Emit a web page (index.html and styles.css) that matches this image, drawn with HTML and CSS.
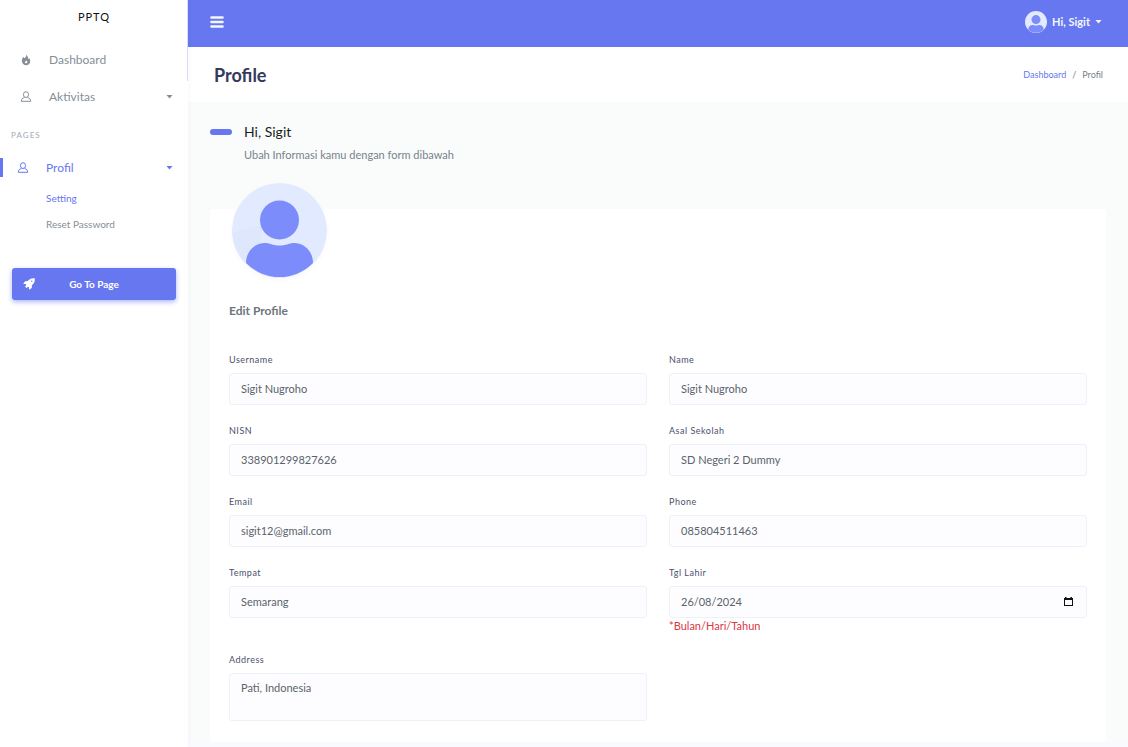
FILE: index.html
```html
<!DOCTYPE html>
<html lang="id">
<head>
<meta charset="utf-8">
<meta name="viewport" content="width=device-width, initial-scale=1">
<title>Profile</title>
<link rel="stylesheet" href="styles.css">
</head>
<body>
<svg class="sprite" aria-hidden="true">
  <symbol id="user-line" viewBox="0 0 12 12"><g fill="none" stroke="currentColor" stroke-width="1"><ellipse cx="6" cy="3.6" rx="2.6" ry="2.9"/><path d="M4.4 6.6C2.500 7 1.300 8 1.300 10.300H10.700C10.700 8 9.500 7 7.600 6.600"/></g></symbol>
  <symbol id="person" viewBox="0 0 95 95"><circle cx="47.500" cy="37" r="19.500"/><path d="M14 80C14 69 22 60 33 60C38 60 40 62.500 47.500 62.500S57 60 62 60C73 60 81 69 81 80A47 47 0 0 1 14 80Z"/></symbol>
</svg>
<div class="app">
  <aside class="sidebar">
    <a class="brand" href="#">PPTQ</a>
    <nav class="menu">
      <a class="menu-item" href="#">
        <svg class="menu-icon" viewBox="0 0 12 12"><path fill="currentColor" d="M6.100.8C6.600 2.400 5.600 3.200 4.600 4.200C3.900 3.800 3.700 3.300 3.700 2.800C2.400 4 1.800 5.600 1.900 7C2 9.600 3.900 11.200 6 11.200S10.200 9.600 10.200 7.200C10.200 5.700 9.500 4.600 8.900 3.800C8.800 4.600 8.500 5 8.100 5.200C8.200 3.300 7.500 1.600 6.100.8ZM6.500 6.500C7.200 7.100 7.500 7.700 7.400 8.300C7.200 9 6.700 9.300 6.100 9.300C5.400 9.300 4.900 8.800 4.900 8.200C5 7.500 5.700 7.300 6.500 6.500Z"/></svg>
        <span class="menu-text">Dashboard</span>
      </a>
      <a class="menu-item" href="#">
        <svg class="menu-icon"><use href="#user-line"/></svg>
        <span class="menu-text">Aktivitas</span>
        <span class="caret"></span>
      </a>
      <h2 class="menu-heading">PAGES</h2>
      <a class="menu-item menu-item-active" href="#">
        <svg class="menu-icon"><use href="#user-line"/></svg>
        <span class="menu-text">Profil</span>
        <span class="caret"></span>
      </a>
      <div class="submenu">
        <a class="submenu-item submenu-active" href="#">Setting</a>
        <a class="submenu-item" href="#">Reset Password</a>
      </div>
    </nav>
    <button class="page-button" type="button">
      <svg class="rocket" viewBox="0 0 12 12"><path fill="currentColor" d="M11.700.3C8.500-.1 6.500.9 4.700 3.100L2.100 3.200L.2 6L3 6.100L3.200 7.200L2 8.400L3.700 10L4.900 8.800L5.900 9L6 11.800L8.800 9.900L8.900 7.300C11.100 5.500 12.100 3.500 11.700.3Z"/><circle cx="8.800" cy="3.200" r=".7" fill="#6777ef"/></svg>
      <span class="page-button-text">Go To Page</span>
    </button>
  </aside>
  <div class="main">
    <header class="navbar">
      <button class="toggle" type="button" aria-label="Menu">
        <svg class="bars" viewBox="0 0 14 12"><path stroke="currentColor" stroke-width="2.600" stroke-linecap="round" d="M1.500 1.500H12.500M1.500 6H12.500M1.500 10.500H12.500"/></svg>
      </button>
      <button class="account" type="button">
        <svg class="account-photo" viewBox="0 0 95 95"><circle cx="47.500" cy="47.500" r="47.500" fill="#e1eaff"/><use href="#person" fill="#7c8dfb"/></svg>
        <span>Hi, Sigit</span>
        <span class="caret"></span>
      </button>
    </header>
    <div class="page-header">
      <h1 class="page-title">Profile</h1>
      <nav class="crumbs" aria-label="Breadcrumb">
        <a class="crumb-link" href="#">Dashboard</a><span>/</span><span>Profil</span>
      </nav>
    </div>
    <main class="content">
      <section class="intro">
        <h2 class="greeting">Hi, Sigit</h2>
        <p class="lead">Ubah Informasi kamu dengan form dibawah</p>
      </section>
      <section class="card">
        <svg class="avatar" viewBox="0 0 95 95" role="img" aria-label="Sigit"><circle cx="47.500" cy="47.500" r="47.500" fill="#e1eaff"/><path d="M0 50L30 42L28 65L12 79A47.500 47.500 0 0 1 0 50Z" fill="#dee7fc"/><use href="#person" fill="#7c8dfb"/></svg>
        <h3 class="card-title">Edit Profile</h3>
        <form class="form">
          <div class="field"><label class="label" for="username">Username</label><input class="control" id="username" value="Sigit Nugroho"></div>
          <div class="field"><label class="label" for="name">Name</label><input class="control" id="name" value="Sigit Nugroho"></div>
          <div class="field"><label class="label" for="nisn">NISN</label><input class="control" id="nisn" value="338901299827626"></div>
          <div class="field"><label class="label" for="school">Asal Sekolah</label><input class="control" id="school" value="SD Negeri 2 Dummy"></div>
          <div class="field"><label class="label" for="email">Email</label><input class="control" id="email" type="email" value="sigit12@gmail.com"></div>
          <div class="field"><label class="label" for="phone">Phone</label><input class="control" id="phone" type="tel" value="085804511463"></div>
          <div class="field"><label class="label" for="place">Tempat</label><input class="control" id="place" value="Semarang"></div>
          <div class="field">
            <label class="label" for="birth">Tgl Lahir</label>
            <div class="date">
              <input class="control" id="birth" value="26/08/2024">
              <button class="date-button" type="button" aria-label="Pilih tanggal"><svg class="calendar" viewBox="0 0 9 9"><path fill="currentColor" d="M0 1H1V0H2.500V1H6.500V0H8V1H9V9H0ZM1 3V8H8V3Z"/></svg></button>
            </div>
            <p class="hint">*Bulan/Hari/Tahun</p>
          </div>
          <div class="field"><label class="label" for="address">Address</label><textarea class="control control-area" id="address">Pati, Indonesia</textarea></div>
        </form>
      </section>
    </main>
  </div>
</div>
</body>
</html>
```
FILE: styles.css
```css
* { box-sizing: border-box; }
body {
  margin: 0;
  background: #f9faff;
  color: #78828a;
  font: 11px/16px Lato, "Noto Sans", sans-serif;
}
h1, h2, h3, p { margin: 0; }
a { color: inherit; text-decoration: none; }
button { border: 0; padding: 0; font: inherit; cursor: pointer; }
.sprite { display: none; }
.app { display: flex; min-height: 100vh; }

.sidebar {
  position: relative;
  flex: 0 0 188px;
  background: #fff;
  box-shadow: 0 0 6px #0000000a;
}
.sidebar::after {
  content: "";
  position: absolute;
  top: 0;
  right: 0;
  width: 1px;
  height: 81px;
  background: #d9ddfb;
}
.brand {
  display: block;
  height: 41px;
  padding-top: 9px;
  color: #111;
  font-size: 11px;
  letter-spacing: 1px;
  text-align: center;
}
.menu-item {
  display: flex;
  align-items: center;
  height: 37px;
  padding: 0 15px 0 20px;
  color: #868e96;
  font-size: 12px;
}
.menu-icon { flex: none; width: 12px; height: 12px; margin-right: 17px; }
.menu-text { flex: 1; }
.caret {
  width: 7px;
  height: 4px;
  background: currentColor;
  clip-path: polygon(0 0, 100% 0, 50% 100%);
}
.menu-heading {
  height: 43px;
  padding: 12px 11px 0;
  color: #adb5bd;
  font-size: 8px;
  font-weight: 600;
  letter-spacing: 1px;
}
.menu-item-active {
  height: 19px;
  padding-left: 14px;
  border-left: 3px solid #6777ef;
  color: #6777ef;
}
.submenu { padding: 8px 0 0 46px; }
.submenu-item { display: block; color: #868e96; font-size: 10px; line-height: 26px; }
.submenu-active { color: #6777ef; }
.page-button {
  display: flex;
  align-items: center;
  width: calc(100% - 24px);
  height: 32px;
  margin: 31px 12px 0;
  padding: 0 11px;
  border-radius: 3px;
  background: #6777ef;
  box-shadow: 0 2px 5px #acb5f6;
  color: #fff;
  font-size: 10px;
  font-weight: 700;
}
.rocket { width: 12px; height: 12px; }
.page-button-text { flex: 1; padding-right: 12px; }

.main { flex: 1; min-width: 0; display: flex; flex-direction: column; padding-bottom: 5px; }
.navbar {
  display: flex;
  align-items: center;
  justify-content: space-between;
  height: 47px;
  padding: 0 26px 4px 22px;
  background: #6777ef;
  color: #f4f6ff;
}
.toggle, .account { background: none; color: inherit; }
.bars { display: block; width: 14px; height: 12px; }
.account { display: flex; align-items: center; gap: 5px; font-weight: 700; }
.account-photo { width: 22px; height: 22px; }
.page-header {
  display: flex;
  align-items: center;
  justify-content: space-between;
  height: 55px;
  padding: 0 25px 0 26px;
  background: #fff;
  box-shadow: 0 1px 3px #00000008;
}
.page-title { color: #34395e; font-size: 18px; line-height: 24px; font-weight: 700; }
.crumbs { display: flex; gap: 6px; font-size: 9px; }
.crumb-link { color: #6777ef; }

.content { flex: 1; display: flex; flex-direction: column; padding: 20px 22px 0; background: #fafcfc; }
.intro { height: 87px; padding-left: 34px; }
.greeting {
  display: flex;
  align-items: center;
  height: 20px;
  margin-left: -34px;
  color: #191d21;
  font-size: 14px;
  font-weight: 400;
}
.greeting::before {
  content: "";
  width: 22px;
  height: 6px;
  margin-right: 12px;
  border-radius: 3px;
  background: #6777ef;
}
.lead { margin-top: 5px; }
.card { flex: 1; padding: 0 19px 20px; border-radius: 3px; background: #fff; }
.avatar {
  display: block;
  width: 95px;
  height: 95px;
  margin: -26px 0 0 3px;
  border-radius: 50%;
  box-shadow: 0 2px 5px #00000008;
}
.card-title { margin: 25px 0 33px; color: #6c757d; font-size: 12px; font-weight: 700; }
.form { display: grid; grid-template-columns: 1fr 1fr; gap: 18px 22px; }
.label {
  display: block;
  margin-bottom: 5px;
  color: #4a4f6c;
  font-size: 9px;
  letter-spacing: 0.5px;
}
.control {
  display: block;
  width: 100%;
  height: 32px;
  padding: 0 11px 2px;
  border: 1px solid #eff1fa;
  border-radius: 3px;
  background: #fdfdff;
  color: #5b636a;
  font: inherit;
}
.control-area { height: 48px; padding: 6px 11px; resize: none; }
.date { position: relative; }
.date-button { position: absolute; right: 14px; top: 11px; background: none; color: #111; }
.calendar { display: block; width: 9px; height: 9px; }
.hint { color: #dc3545; }
```
